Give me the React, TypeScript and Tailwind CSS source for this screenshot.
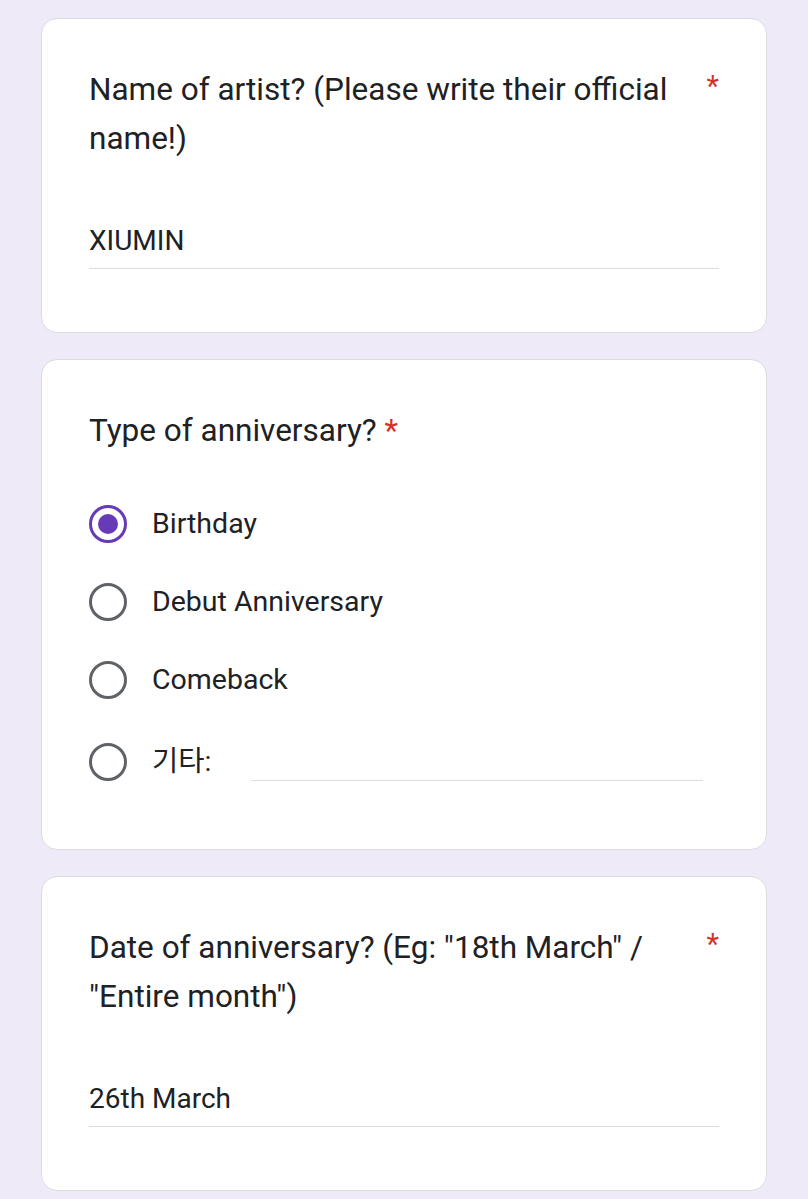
import { ReactNode } from 'react';

const Card = ({ children, className = '' }: { children: ReactNode; className?: string }) => (
  <div className={`rounded-[16px] border border-[#dadce0] bg-white pl-[47px] pr-[47px] ${className}`}>{children}</div>
);

const Required = () => <span className="text-[#d93025]">*</span>;

const Radio = ({ checked }: { checked?: boolean }) =>
  checked ? (
    <span className="flex h-[38px] w-[38px] shrink-0 items-center justify-center rounded-full border-[3px] border-[#673ab7]">
      <span className="h-[20px] w-[20px] rounded-full bg-[#673ab7]" />
    </span>
  ) : (
    <span className="h-[38px] w-[38px] shrink-0 rounded-full border-[3px] border-[#5f6368]" />
  );

export default function App() {
  const options = ['Birthday', 'Debut Anniversary', 'Comeback'];

  return (
    <div
      className="flex min-h-[1199px] flex-col gap-[26px] bg-[#eeeaf8] pl-[41px] pr-[41px] pt-[18px] text-[#202124]"
      style={{ fontFamily: 'Roboto, "Noto Sans CJK KR", sans-serif' }}
    >
      <Card className="h-[315px] pt-[46px]">
        <div className="flex items-start justify-between">
          <p className="w-[590px] text-[31.5px] leading-[49px]">Name of artist? (Please write their official name!)</p>
          <span className="pt-[6px] text-[29px] leading-[30px] text-[#d93025]">*</span>
        </div>
        <div className="mt-[61px] border-b border-[#dadce0] pb-[10px] text-[28px] leading-[34px]">XIUMIN</div>
      </Card>

      <Card className="h-[491px] pt-[47px]">
        <p className="text-[31.5px] leading-[48px]">
          Type of anniversary? <Required />
        </p>
        <div className="mt-[50px] flex flex-col gap-[40px]">
          {options.map((o, i) => (
            <div key={o} className="flex items-center gap-[25px]">
              <Radio checked={i === 0} />
              <span className="text-[28.5px] leading-[38px]">{o}</span>
            </div>
          ))}
          <div className="mt-[4px] flex items-center gap-[25px]">
            <Radio />
            <span className="w-[74px] text-[28.5px] leading-[38px]">기타:</span>
            <div className="mt-[36px] h-px w-[452px] bg-[#dadce0]" />
          </div>
        </div>
      </Card>

      <Card className="h-[315px] pt-[46px]">
        <div className="flex items-start justify-between">
          <p className="w-[590px] text-[31.5px] leading-[49px]">
            Date of anniversary? (Eg: "18th March" / "Entire month")
          </p>
          <span className="pt-[6px] text-[29px] leading-[30px] text-[#d93025]">*</span>
        </div>
        <div className="mt-[61px] border-b border-[#dadce0] pb-[10px] text-[28px] leading-[34px]">26th March</div>
      </Card>
    </div>
  );
}
